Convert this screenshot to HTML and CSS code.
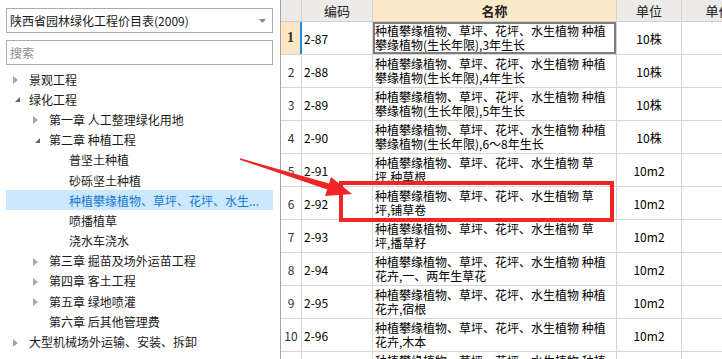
FILE: index.html
```html
<!DOCTYPE html>
<html lang="zh-CN">
<head>
    <meta charset="UTF-8">
    <title>陕西省园林绿化工程价目表</title>
    <link rel="stylesheet" href="styles.css">
</head>
<body>
    <div class="app">
        <aside class="side">
            <div class="select">
                <span>陕西省园林绿化工程价目表(2009)</span>
                <svg class="caret" width="7" height="4" viewBox="0 0 7 4"><polygon points="0,0 7,0 3.5,4" fill="#8a8a8a"/></svg>
            </div>
            <div class="search">搜索</div>
            <ul class="tree">
                <li class="lv0"><span class="tog closed"></span>景观工程</li>
                <li class="lv0"><span class="tog open"></span>绿化工程</li>
                <li class="lv1"><span class="tog closed"></span>第一章 人工整理绿化用地</li>
                <li class="lv1"><span class="tog open"></span>第二章 种植工程</li>
                <li class="lv2"><span class="tog"></span>普坚土种植</li>
                <li class="lv2"><span class="tog"></span>砂砾坚土种植</li>
                <li class="lv2 active"><span class="tog"></span>种植攀缘植物、草坪、花坪、水生...</li>
                <li class="lv2"><span class="tog"></span>喷播植草</li>
                <li class="lv2"><span class="tog"></span>浇水车浇水</li>
                <li class="lv1"><span class="tog closed"></span>第三章 掘苗及场外运苗工程</li>
                <li class="lv1"><span class="tog closed"></span>第四章 客土工程</li>
                <li class="lv1"><span class="tog closed"></span>第五章 绿地喷灌</li>
                <li class="lv1"><span class="tog"></span>第六章 后其他管理费</li>
                <li class="lv0"><span class="tog closed"></span>大型机械场外运输、安装、拆卸</li>
            </ul>
        </aside>

        <main class="grid">
            <div class="row head">
                <div class="cell c-no"></div>
                <div class="cell c-code">编码</div>
                <div class="cell c-name">名称</div>
                <div class="cell c-unit">单位</div>
                <div class="cell c-price">单价</div>
            </div>
            <div class="row sel">
                <div class="cell c-no">1</div>
                <div class="cell c-code">2-87</div>
                <div class="cell c-name">种植攀缘植物、草坪、花坪、水生植物 种植<br>攀缘植物(生长年限),3年生长</div>
                <div class="cell c-unit">10株</div>
                <div class="cell c-price"></div>
            </div>
            <div class="row">
                <div class="cell c-no">2</div>
                <div class="cell c-code">2-88</div>
                <div class="cell c-name">种植攀缘植物、草坪、花坪、水生植物 种植<br>攀缘植物(生长年限),4年生长</div>
                <div class="cell c-unit">10株</div>
                <div class="cell c-price"></div>
            </div>
            <div class="row">
                <div class="cell c-no">3</div>
                <div class="cell c-code">2-89</div>
                <div class="cell c-name">种植攀缘植物、草坪、花坪、水生植物 种植<br>攀缘植物(生长年限),5年生长</div>
                <div class="cell c-unit">10株</div>
                <div class="cell c-price"></div>
            </div>
            <div class="row">
                <div class="cell c-no">4</div>
                <div class="cell c-code">2-90</div>
                <div class="cell c-name">种植攀缘植物、草坪、花坪、水生植物 种植<br>攀缘植物(生长年限),6～8年生长</div>
                <div class="cell c-unit">10株</div>
                <div class="cell c-price"></div>
            </div>
            <div class="row">
                <div class="cell c-no">5</div>
                <div class="cell c-code">2-91</div>
                <div class="cell c-name">种植攀缘植物、草坪、花坪、水生植物 草<br>坪,种草根</div>
                <div class="cell c-unit">10m2</div>
                <div class="cell c-price"></div>
            </div>
            <div class="row">
                <div class="cell c-no">6</div>
                <div class="cell c-code">2-92</div>
                <div class="cell c-name">种植攀缘植物、草坪、花坪、水生植物 草<br>坪,铺草卷</div>
                <div class="cell c-unit">10m2</div>
                <div class="cell c-price"></div>
            </div>
            <div class="row">
                <div class="cell c-no">7</div>
                <div class="cell c-code">2-93</div>
                <div class="cell c-name">种植攀缘植物、草坪、花坪、水生植物 草<br>坪,播草籽</div>
                <div class="cell c-unit">10m2</div>
                <div class="cell c-price"></div>
            </div>
            <div class="row">
                <div class="cell c-no">8</div>
                <div class="cell c-code">2-94</div>
                <div class="cell c-name">种植攀缘植物、草坪、花坪、水生植物 种植<br>花卉,一、两年生草花</div>
                <div class="cell c-unit">10m2</div>
                <div class="cell c-price"></div>
            </div>
            <div class="row">
                <div class="cell c-no">9</div>
                <div class="cell c-code">2-95</div>
                <div class="cell c-name">种植攀缘植物、草坪、花坪、水生植物 种植<br>花卉,宿根</div>
                <div class="cell c-unit">10m2</div>
                <div class="cell c-price"></div>
            </div>
            <div class="row">
                <div class="cell c-no">10</div>
                <div class="cell c-code">2-96</div>
                <div class="cell c-name">种植攀缘植物、草坪、花坪、水生植物 种植<br>花卉,木本</div>
                <div class="cell c-unit">10m2</div>
                <div class="cell c-price"></div>
            </div>
            <div class="row">
                <div class="cell c-no">11</div>
                <div class="cell c-code">2-97</div>
                <div class="cell c-name">种植攀缘植物、草坪、花坪、水生植物 种植<br>水生植物</div>
                <div class="cell c-unit">10m2</div>
                <div class="cell c-price"></div>
            </div>
        </main>
    </div>

    <!-- annotation drawn over the screenshot -->
    <svg class="arrow" width="722" height="359" viewBox="0 0 722 359">
        <polygon fill="#f02626" points="239.8,159.8 240.2,158.2 329,183.6 331,177 352,194 325,196 327.2,189.4"/>
    </svg>
    <div class="mark"></div>
</body>
</html>
```

FILE: styles.css
```css
body {
    margin: 0;
    background: #fff;
    color: #1a1a1a;
    font-family: "Noto Sans CJK SC", "Noto Sans", sans-serif;
    font-size: 12px;
    overflow: hidden;
}

.app {
    display: flex;
    width: 722px;
    height: 359px;
    overflow: hidden;
}

/* left panel */
.side {
    width: 280px;
    flex-shrink: 0;
    box-sizing: border-box;
    padding: 8px 7px 0 6px;
}

.select {
    height: 25px;
    box-sizing: border-box;
    border: 1px solid #a9a9a9;
    display: flex;
    align-items: center;
    justify-content: space-between;
    padding: 0 6px 0 3px;
    line-height: 1;
}

.search {
    height: 25px;
    box-sizing: border-box;
    border: 1px solid #ababab;
    margin-top: 7px;
    padding-left: 3px;
    display: flex;
    align-items: center;
    color: #8c8c8c;
}

.tree {
    list-style: none;
    margin: 4px 0 0;
    padding: 0;
}

.tree li {
    height: 20.2px;
    display: flex;
    align-items: center;
    white-space: nowrap;
    padding-left: 2px;
}

.tree .lv1 { padding-left: 22px; }
.tree .lv2 { padding-left: 42px; }

.tree li.active {
    background: #cce8ff;
    color: #1a79d0;
}

.tog {
    width: 21px;
    height: 20px;
    flex-shrink: 0;
    position: relative;
}

.tog.closed::before {
    content: "";
    position: absolute;
    left: 5px;
    top: 7px;
    border-left: 5px solid #a8a8a8;
    border-top: 4px solid transparent;
    border-bottom: 4px solid transparent;
}

.tog.open::before {
    content: "";
    position: absolute;
    left: 7px;
    top: 8px;
    border-right: 5px solid #666;
    border-top: 5px solid transparent;
}

/* right grid */
.grid {
    flex: 1;
    min-width: 0;
    border-left: 1px solid #a3a3a3;
    overflow: hidden;
}

.row {
    display: flex;
    height: 33px;
    box-sizing: border-box;
    border-bottom: 1px solid #d6d6d6;
    color: #000;
}

.cell {
    flex-shrink: 0;
    box-sizing: border-box;
    border-right: 1px solid #d6d6d6;
    display: flex;
    align-items: center;
    white-space: nowrap;
}

.c-no { width: 21px; justify-content: center; color: #333; }
.c-code { width: 71px; padding-left: 2px; }
.c-name { width: 244px; padding: 2px 2px 0; align-items: flex-start; line-height: 14px; }
.c-unit { width: 65px; justify-content: center; }
.c-price { width: 74px; justify-content: center; }

.row.head {
    height: 22px;
    background: #ecebe9;
    border-bottom-color: #cfcfcf;
    font-size: 13px;
    color: #222;
}

.row.head .cell {
    justify-content: center;
    align-items: center;
    padding: 0;
    border-right-color: #d2d2d2;
}

.row.head .c-name {
    background: #fde8c8;
    font-weight: bold;
}

.row.sel .c-no {
    background: #fde6c3;
    border-right: 2px solid #1e88e5;
    font-weight: bold;
    font-family: "Liberation Serif", serif;
    font-size: 14px;
}

.row.sel .c-name {
    box-shadow: inset 0 0 0 2px #7d7d7d;
}

/* annotation */
.arrow {
    position: absolute;
    left: 0;
    top: 0;
    pointer-events: none;
}

.mark {
    position: absolute;
    left: 339px;
    top: 181px;
    width: 275px;
    height: 41px;
    box-sizing: border-box;
    border: 4px solid #f02626;
}
```
